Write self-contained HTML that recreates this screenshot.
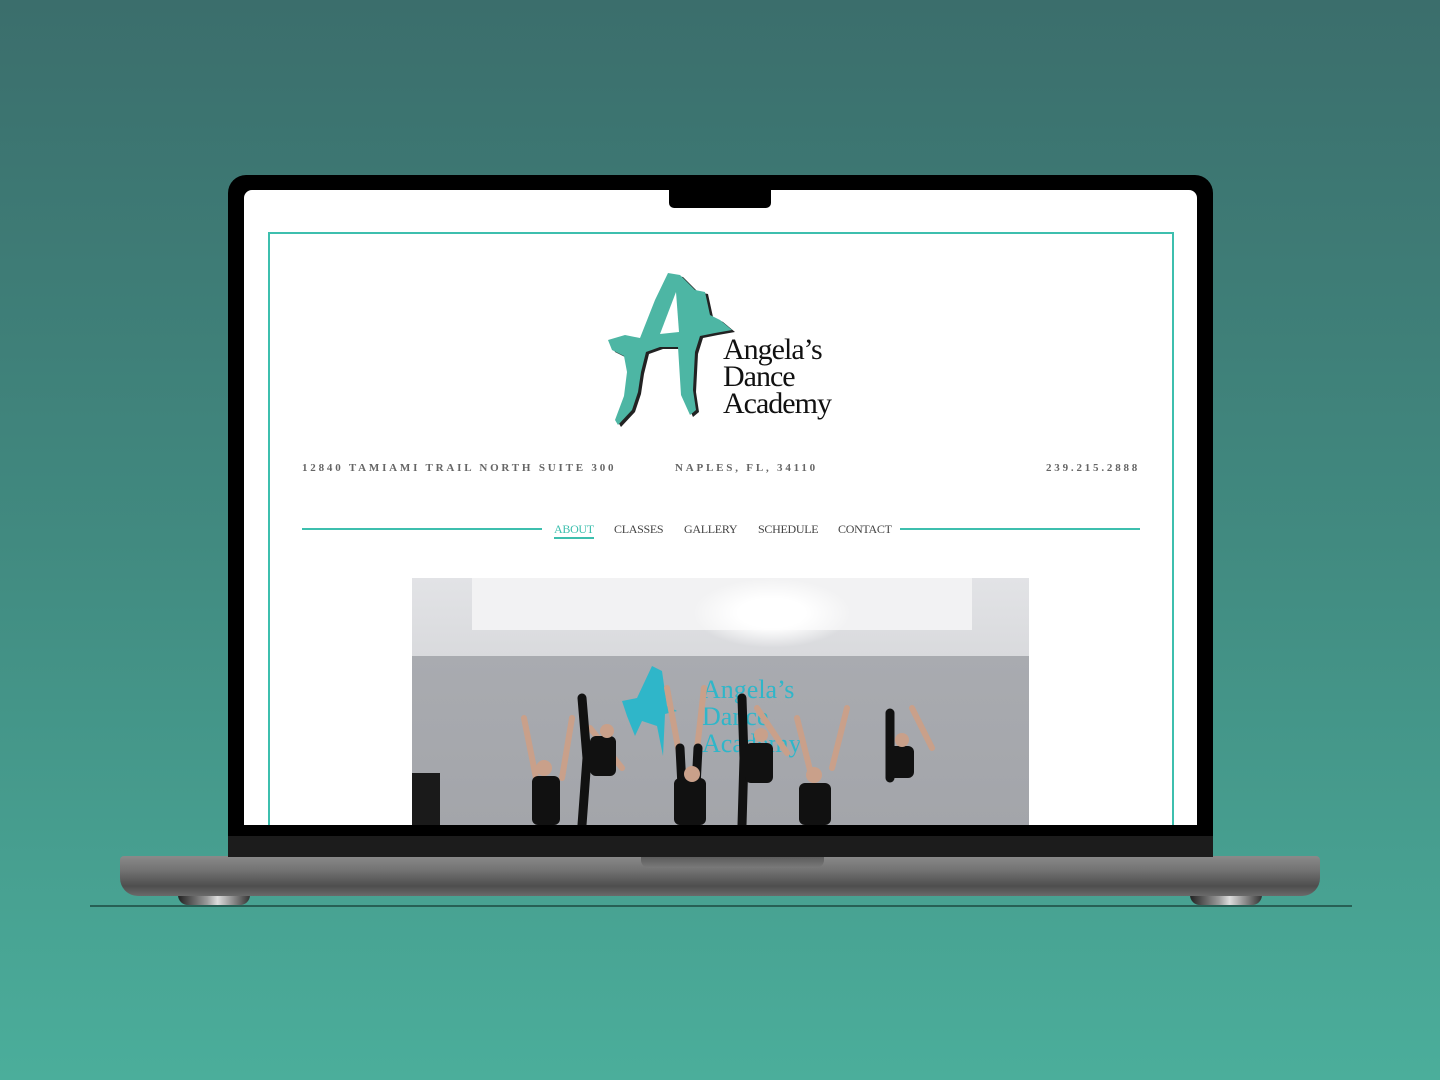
<!DOCTYPE html>
<html><head><meta charset="utf-8"><style>
*{margin:0;padding:0;box-sizing:border-box}
body{width:1440px;height:1080px;overflow:hidden;position:relative;background:linear-gradient(180deg,#3b6e6c 0%,#418a80 50%,#4bae9b 100%);font-family:"Liberation Serif",serif}
.a{position:absolute}
.n{position:absolute;top:522px;font-size:12px;color:#444;letter-spacing:-0.3px}
</style></head><body>
<div class="a" style="left:90px;top:905px;width:1262px;height:2px;background:#1f4f46;opacity:.8"></div>
<div class="a" style="left:178px;top:893px;width:72px;height:12px;border-radius:0 0 10px 10px;background:linear-gradient(90deg,#222,#999 40%,#ddd 55%,#333)"></div>
<div class="a" style="left:1190px;top:893px;width:72px;height:12px;border-radius:0 0 10px 10px;background:linear-gradient(90deg,#222,#999 40%,#ddd 55%,#333)"></div>
<div class="a" style="left:120px;top:856px;width:1200px;height:40px;border-radius:4px 4px 18px 18px;background:linear-gradient(180deg,#8a8a8a 0%,#737373 35%,#4e4e4e 75%,#6a6a6a 100%)"></div>
<div class="a" style="left:641px;top:856px;width:183px;height:12px;border-radius:0 0 8px 8px;background:linear-gradient(180deg,#5a5a5a,#7a7a7a)"></div>
<div class="a" style="left:228px;top:175px;width:985px;height:682px;border-radius:18px 18px 0 0;background:#000"></div>
<div class="a" style="left:228px;top:836px;width:985px;height:21px;background:#1c1c1c"></div>
<div class="a" style="left:244px;top:190px;width:953px;height:635px;border-radius:8px 8px 0 0;background:#fff;overflow:hidden">
  <div class="a" style="left:425px;top:0;width:102px;height:18px;background:#000;border-radius:0 0 5px 5px"></div>
  <div class="a" style="left:24px;top:42px;width:906px;height:600px;border:2px solid #3dbfae;border-bottom:none"></div>
</div>
<svg class="a" style="left:600px;top:262px" width="140" height="170" viewBox="600 262 140 170">
<g transform="translate(3,2)"><path fill="#222" d="M608 340L625 335L640 338L655 300L668 273L680 275L695 290L705 292L710 315L720 320L732 330L715 333L700 336L695 352L693 390L696 410L690 415L681 395L678 347L660 347L646 352L641 372L638 392L632 410L618 425L615 420L624 396L627 372L624 356L612 350Z"/></g>
<path fill="#4db6a4" d="M608 340L625 335L640 338L655 300L668 273L680 275L695 290L705 292L710 315L720 320L732 330L715 333L700 336L695 352L693 390L696 410L690 415L681 395L678 347L660 347L646 352L641 372L638 392L632 410L618 425L615 420L624 396L627 372L624 356L612 350Z"/>
<path fill="#fff" d="M676 292L679 332L660 334Z"/>
</svg>
<div class="a" style="left:723px;top:336px;font-size:30px;line-height:27px;color:#111;letter-spacing:-1px">Angela’s<br>Dance<br>Academy</div>
<div class="a" style="left:302px;top:462px;font-size:11px;letter-spacing:2.8px;color:#666;font-weight:bold">12840 TAMIAMI TRAIL NORTH SUITE 300</div>
<div class="a" style="left:675px;top:462px;font-size:11px;letter-spacing:2.8px;color:#666;font-weight:bold">NAPLES, FL, 34110</div>
<div class="a" style="left:1046px;top:462px;font-size:11px;letter-spacing:2.8px;color:#666;font-weight:bold">239.215.2888</div>
<div class="a" style="left:302px;top:528px;width:240px;height:2px;background:#3dbfae"></div>
<div class="a" style="left:900px;top:528px;width:240px;height:2px;background:#3dbfae"></div>
<div class="n" style="left:554px;color:#3dbfae">ABOUT</div>
<div class="a" style="left:554px;top:537px;width:40px;height:2px;background:#3dbfae"></div>
<div class="n" style="left:614px">CLASSES</div>
<div class="n" style="left:684px">GALLERY</div>
<div class="n" style="left:758px">SCHEDULE</div>
<div class="n" style="left:838px">CONTACT</div>
<div class="a" style="left:412px;top:578px;width:617px;height:247px;overflow:hidden;background:#a8a9ae">
  <div class="a" style="left:0;top:0;width:617px;height:78px;background:linear-gradient(180deg,#e2e3e6,#d9dadd)"></div>
  <div class="a" style="left:60px;top:0;width:500px;height:52px;background:#f2f2f3"></div>
  <div class="a" style="left:280px;top:0;width:160px;height:70px;background:radial-gradient(ellipse,#fff 30%,rgba(255,255,255,0) 70%)"></div>
  <div class="a" style="left:0;top:78px;width:617px;height:169px;background:linear-gradient(180deg,#a9abb0,#a3a5aa)"></div>
  <div class="a" style="left:290px;top:98px;font-size:26px;line-height:27px;color:#2fb6c9">Angela’s<br>Dance<br>Academy</div>
  <svg class="a" style="left:205px;top:88px" width="80" height="90"><path fill="#2fb6c9" d="M5 35L20 32L35 0L45 5L50 40L60 45L48 48L46 90L40 60L25 55L18 70L10 50Z"/></svg>
  <div class="a" style="left:0;top:195px;width:28px;height:52px;background:#1a1a1a"></div>
  <svg class="a" style="left:0;top:0" width="617" height="247">
    <g stroke="#c9a08a" stroke-width="6" stroke-linecap="round" fill="none">
      <path d="M112 140L124 200M160 140L150 200"/>
      <path d="M178 150L210 190"/>
      <path d="M255 110L268 180M292 110L284 180"/>
      <path d="M345 130L375 175"/>
      <path d="M385 140L400 200M435 130L420 190"/>
      <path d="M500 130L520 170"/>
    </g>
    <g stroke="#111" stroke-width="9" stroke-linecap="round" fill="none">
      <path d="M170 120L175 180L170 247"/>
      <path d="M330 120L332 180L330 247"/>
      <path d="M268 170L272 247M286 170L282 247"/>
      <path d="M478 135L478 200"/>
    </g>
    <g fill="#111">
      <rect x="120" y="198" width="28" height="49" rx="6"/>
      <rect x="178" y="158" width="26" height="40" rx="6"/>
      <rect x="262" y="200" width="32" height="47" rx="6"/>
      <rect x="333" y="165" width="28" height="40" rx="6"/>
      <rect x="387" y="205" width="32" height="42" rx="6"/>
      <rect x="474" y="168" width="28" height="32" rx="6"/>
    </g>
    <g fill="#c9a08a"><circle cx="132" cy="190" r="8"/><circle cx="195" cy="153" r="7"/><circle cx="280" cy="196" r="8"/><circle cx="349" cy="157" r="7"/><circle cx="402" cy="197" r="8"/><circle cx="490" cy="162" r="7"/></g>
  </svg>
</div>
</body></html>
